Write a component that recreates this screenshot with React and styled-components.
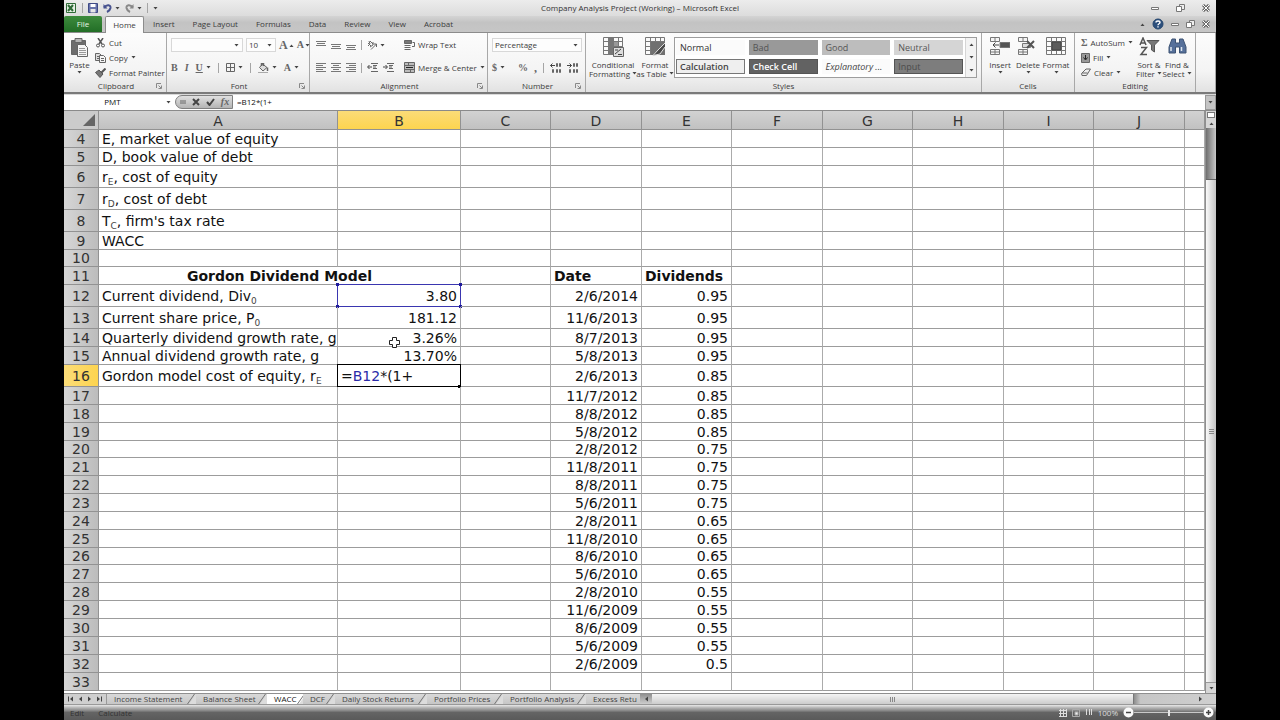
import React from "react";
import styled, { createGlobalStyle, css } from "styled-components";

const Global = createGlobalStyle`
  * { box-sizing: border-box; }
  body { margin: 0; background: #000; }
  button, input, select { font: inherit; color: inherit; margin: 0; padding: 0; border: 0; background: none; }
  svg { display: block; flex: none; }
`;

const Page = styled.div`
  min-height: 100vh;
  padding: 0 5%;
  display: flex;
  flex-direction: column;
  font: 8px/10px "Open Sans", "Noto Sans", sans-serif;
  color: #3c3c3c;
`;

/* ---------- title bar and tabs ---------- */
const TitleBar = styled.header`
  height: 16px;
  display: grid;
  grid-template-columns: 1fr auto 1fr;
  align-items: center;
  background: linear-gradient(#ececec, #dcdcdc);
`;
const QuickAccess = styled.div`
  display: flex;
  align-items: center;
  gap: 5px;
  padding-left: 1px;
`;
const Title = styled.h1`
  margin: 0;
  font: inherit;
  color: #333;
`;
const WindowButtons = styled.div`
  display: flex;
  justify-content: flex-end;
  align-items: center;
  gap: ${(p) => p.$gap || 0}px;
  padding-right: 6px;
  margin-left: auto;
`;
const IconButton = styled.button`
  display: flex;
  align-items: center;
  justify-content: center;
  gap: 3px;
`;
const TabBar = styled.nav`
  height: 17px;
  display: flex;
  align-items: stretch;
  background: linear-gradient(#d4d4d4, #c3c3c3 40%, #c6c6c6);
  border-bottom: 1px solid #8c8c8c;
`;
const Tab = styled.button`
  padding: 0 9px;
  ${(p) =>
    p.$kind === "file" &&
    css`
      width: 38px;
      margin-right: 3px;
      color: #e8f5e4;
      background: linear-gradient(#3d8b3d, #226e26);
      border-radius: 2px 2px 0 0;
    `}
  ${(p) =>
    p.$kind === "active" &&
    css`
      width: 39px;
      padding: 0;
      margin-bottom: -1px;
      background: #fbfbfb;
      border: 1px solid #8c8c8c;
      border-bottom: 0;
      border-radius: 2px 2px 0 0;
    `}
`;

/* ---------- ribbon ---------- */
const Ribbon = styled.section`
  height: 61px;
  display: flex;
  background: linear-gradient(#fcfcfc, #f4f4f4 65%, #e2e2e2);
  border-bottom: 2px solid #7a7a7a;
  overflow: hidden;
`;
const Group = styled.div`
  flex: ${(p) => (p.$grow ? "1 0" : "0 0")} ${(p) => p.$w}px;
  min-width: 0;
  display: flex;
  flex-direction: column;
  border-right: 1px solid #a8a8a8;
`;
const GroupBody = styled.div`
  flex: 1;
  display: flex;
  gap: ${(p) => p.$gap || 0}px;
  padding: 2px ${(p) => p.$pad || 4}px 0;
`;
const GroupLabel = styled.div`
  height: 12px;
  display: flex;
  align-items: center;
  span { flex: 1; text-align: center; }
  button { margin: 0 4px 0 -12px; }
`;
const Stack = styled.div`
  display: flex;
  flex-direction: column;
  gap: ${(p) => p.$gap || 0}px;
`;
const Line = styled.div`
  height: ${(p) => p.$h || 15}px;
  display: flex;
  align-items: center;
  gap: ${(p) => p.$gap || 4}px;
`;
const Tool = styled.button`
  display: flex;
  align-items: center;
  gap: ${(p) => p.$gap || 3}px;
  min-width: ${(p) => p.$w || 0}px;
  white-space: nowrap;
`;
const BigTool = styled.button`
  flex: none;
  width: ${(p) => p.$w}px;
  margin-top: 2px;
  display: flex;
  flex-direction: column;
  align-items: center;
  justify-content: flex-start;
  align-self: flex-start;
  white-space: nowrap;
  line-height: 8px;
  > svg:first-child { margin-bottom: 3px; }
  > svg:last-child { margin-top: 2px; }
  span { display: flex; align-items: center; gap: 2px; min-height: 9px; }
`;
const Divider = styled.i`
  width: 1px;
  height: ${(p) => p.$h || 10}px;
  background: #a5a5a5;
`;
const Select = styled.select`
  appearance: none;
  width: ${(p) => p.$w}px;
  height: 14px;
  padding-left: 2px;
  border: 1px solid #d8d8d8;
  background: #fdfdfd;
`;
const SelectBox = styled.label`
  display: flex;
  align-items: center;
  svg { margin-left: -9px; margin-right: 4px; pointer-events: none; }
`;
const Letter = styled.span`
  font-family: "Liberation Serif", serif;
  font-size: ${(p) => p.$s || 10}px;
  font-weight: bold;
  font-style: ${(p) => (p.$i ? "italic" : "normal")};
  text-decoration: ${(p) => (p.$u ? "underline" : "none")};
  color: #666;
`;
const Gallery = styled.div`
  height: 41px;
  flex: 1;
  min-width: 0;
  margin-top: 2px;
  display: flex;
  border: 1px solid #9d9d9d;
  background: #fff;
`;
const Swatches = styled.div`
  flex: 1;
  display: grid;
  grid-template-columns: repeat(4, 1fr);
  grid-auto-rows: 15px;
  gap: 4px;
  padding: 2px 0 0 1px;
`;
const Swatch = styled.button`
  text-align: left;
  padding-left: 3px;
  font-size: 9px;
  color: ${(p) => p.$fg};
  background: ${(p) => p.$bg};
  font-weight: ${(p) => (p.$b ? 600 : 400)};
  font-style: ${(p) => (p.$i ? "italic" : "normal")};
  border: 1px solid ${(p) => p.$line || "transparent"};
  white-space: nowrap;
`;
const GalleryScroll = styled.div`
  width: 11px;
  margin-left: 2px;
  display: grid;
  background: #f3f3f3;
  border-left: 1px solid #d5d5d5;
`;

/* ---------- formula bar ---------- */
const FormulaBar = styled.div`
  height: 17px;
  display: flex;
  align-items: stretch;
  background: #fff;
  border-top: 1px solid #dadada;
  border-bottom: 1px solid #8a8a8a;
  color: #111;
`;
const NameBox = styled.input`
  width: 97px;
  padding-bottom: 2px;
  text-align: center;
`;
const NameCaret = styled(IconButton)`
  width: 14px;
`;
const FxStrip = styled.div`
  width: 58px;
  margin: 0 0 1px;
  display: flex;
  align-items: center;
  justify-content: space-around;
  background: linear-gradient(#e0e0e0, #b4b4b4);
  border: 1px solid #808080;
  border-radius: 8px 0 0 8px;
`;
const FormulaInput = styled.input`
  flex: 1;
  min-width: 0;
  padding: 0 0 2px 4px;
`;
const Expand = styled(IconButton)`
  width: 11px;
  background: #c4c4c4;
  border: 1px solid #999;
`;

/* ---------- sheet ---------- */
const Work = styled.main`
  flex: 1;
  display: flex;
  background: #fff;
`;
const SheetPane = styled.div`
  flex: 1;
  min-width: 0;
  overflow: hidden;
`;
const Sheet = styled.table`
  width: 100%;
  table-layout: fixed;
  border-collapse: separate;
  border-spacing: 0;
  font: 14px/16px "DejaVu Sans", Verdana, sans-serif;
  color: #111;
`;
const Row = styled.tr`
  height: ${(p) => p.$h}px;
`;
const headBase = css`
  padding: 0;
  font-weight: 400;
  text-align: center;
  color: #333;
  border-right: 1px solid #929292;
  border-bottom: 1px solid #929292;
`;
const ColHead = styled.th`
  ${headBase}
  padding-top: 2px;
  background: ${(p) => (p.$on ? "linear-gradient(#fbdc78, #fdd44f)" : "linear-gradient(#d2d2d2, #c1c1c1)")};
`;
const Corner = styled.td`
  ${headBase}
  background: #cbcbcb;
  svg { margin: 0 3px 0 auto; }
`;
const RowHead = styled.th`
  ${headBase}
  background: ${(p) => (p.$on ? "linear-gradient(90deg, #fbdc78, #fdd44f)" : "linear-gradient(90deg, #d6d6d6, #bcbcbc)")};
`;
const Cell = styled.td`
  position: relative;
  padding: 0 3px;
  white-space: nowrap;
  text-align: ${(p) => p.$align || "left"};
  font-weight: ${(p) => (p.$bold ? 700 : 400)};
  border-right: 1px solid #ababab;
  border-bottom: 1px solid #9c9c9c;
  sub { font-size: 9px; line-height: 0; vertical-align: -3px; color: #444; }
`;
const Reference = styled.div`
  position: absolute;
  inset: -1px;
  border: 1px solid #3a36b0;
`;
const Handle = styled.i`
  position: absolute;
  width: 3px;
  height: 3px;
  background: ${(p) => p.$c || "#1f1a9c"};
  ${(p) => p.$at}
`;
const Editor = styled.div`
  position: absolute;
  inset: -1px;
  display: flex;
  align-items: center;
  padding-left: 3px;
  background: #fff;
  border: 1px solid #000;
  b { font-weight: 400; color: #2a2aa8; }
`;
const Pointer = styled.svg`
  position: absolute;
  left: 51px;
  top: 8px;
`;

/* ---------- scroll bars, sheet tabs, status ---------- */
const VScroll = styled.div`
  width: 11px;
  display: flex;
  flex-direction: column;
  background: #d6d6d6;
  border-left: 1px solid #8f8f8f;
`;
const Split = styled.div`
  height: 6px;
  margin: 1px 1px 0;
  background: #fff;
  border: 1px solid #777;
`;
const Arrow = styled(IconButton)`
  height: 10px;
`;
const VTrack = styled.div`
  flex: 1;
  display: flex;
  flex-direction: column;
  padding-top: 51px;
  background: linear-gradient(90deg, #6f6f6f, #c8c8c8);
`;
const VThumb = styled.div`
  flex: 1;
  display: flex;
  align-items: center;
  justify-content: center;
  background: linear-gradient(90deg, #fafafa, #c4c4c4);
  border-top: 1px solid #666;
  border-bottom: 1px solid #999;
`;
const SheetBar = styled.footer`
  height: 12px;
  display: flex;
  align-items: stretch;
  background: #cfcfcf;
  border-top: 1px solid #8f8f8f;
  border-bottom: 1px solid #999;
`;
const SheetNav = styled.div`
  width: 43px;
  display: flex;
  align-items: center;
  justify-content: space-around;
  padding: 0 2px;
  border-right: 1px solid #999;
`;
const SheetTabs = styled.div`
  width: 533px;
  display: flex;
  overflow: hidden;
`;
const SheetTab = styled.button`
  flex: none;
  width: ${(p) => p.$w}px;
  display: flex;
  align-items: center;
  justify-content: space-between;
  padding-left: 7px;
  white-space: nowrap;
  line-height: 10px;
  background: ${(p) => (p.$on ? "#fff" : "linear-gradient(#d9d9d9, #c6c6c6)")};
  color: ${(p) => (p.$on ? "#111" : "#444")};
`;
const HScroll = styled.div`
  flex: 1;
  display: flex;
  background: linear-gradient(#909090, #cdcdcd);
`;
const HArrow = styled(IconButton)`
  width: 12px;
`;
const HThumb = styled.div`
  flex: 1;
  display: flex;
  align-items: center;
  justify-content: center;
  background: linear-gradient(#f4f4f4, #cccccc);
  border-right: 1px solid #777;
`;
const HEnd = styled.div`
  width: 82px;
  display: flex;
  align-items: center;
  justify-content: flex-end;
  padding-right: 12px;
  background: linear-gradient(90deg, #8d8d8d, #c6c6c6 8%, #cfcfcf);
`;
const StatusBar = styled.div`
  height: 15px;
  display: flex;
  align-items: center;
  gap: 14px;
  padding: 0 2px 0 6px;
  color: #333;
  background: linear-gradient(#e8e8e8, #b0b0b0 20%, #8c8c8c 36%, #646464 50%, #5a5a5a);
`;
const StatusRight = styled.div`
  margin-left: auto;
  display: flex;
  align-items: center;
  gap: 5px;
  color: #ddd;
`;
const Zoom = styled.label`
  display: flex;
  align-items: center;
  input {
    appearance: none;
    width: 69px;
    height: 1px;
    background: #c9c9c9;
  }
  input::-webkit-slider-thumb { appearance: none; width: 2px; height: 6px; background: #e6e6e6; }
`;

/* ---------- drawings ---------- */
const Caret = ({ up }) => (
  <svg width="5" height="3" viewBox="0 0 5 3" aria-hidden="true">
    <path d={up ? "M0.5 3L2.5 0.5L4.5 3Z" : "M0.5 0L2.5 2.5L4.5 0Z"} fill="#444" />
  </svg>
);
const Launcher = () => (
  <svg width="6" height="6" viewBox="0 0 6 6" fill="none" stroke="#888" aria-hidden="true">
    <path d="M0.5 5V0.5H5M2.5 2.5L5 5M5.5 2.5V5.5H2.5" />
  </svg>
);
const Ico = ({ w = 12, h = 12, children, sw = 1, c = "#666" }) => (
  <svg width={w} height={h} viewBox={`0 0 ${w} ${h}`} fill="none" stroke={c} strokeWidth={sw} aria-hidden="true">
    {children}
  </svg>
);
const LineIcon = ({ rows }) => (
  <Ico w={10} h={9} c="#777">
    {rows.map(([y, a, b]) => (
      <path key={y} d={`M${a} ${y + 0.5}H${b}`} />
    ))}
  </Ico>
);
const Excel = () => (
  <Ico w={12} h={12} c="#2f6b37">
    <path d="M1.5 1.5H10.5V10.5H1.5Z" fill="#e5f0e4" />
    <path d="M3 3L8 9M8 3L3 9" strokeWidth="2" />
  </Ico>
);
const Save = () => (
  <Ico w={10} h={10} c="#3f4a86">
    <path d="M0.5 0.5H9.5V9.5H0.5Z" fill="#6873ab" />
    <path d="M2.5 1H7.5V4H2.5Z" fill="#fff" stroke="none" />
    <path d="M2.5 6H7.5V9.5H2.5Z" fill="#e6e6e6" stroke="none" />
  </Ico>
);
const Undo = ({ flip }) => (
  <Ico w={9} h={10} c={flip ? "#888" : "#47528f"} sw={2}>
    <g transform={flip ? "matrix(-1 0 0 1 9 0)" : undefined}>
      <path d="M1 4.5C4 1 8 2 7.5 5C7 7.5 5 8.5 4 9" />
      <path d="M0.5 1V5.5H4.5Z" fill={flip ? "#888" : "#47528f"} stroke="none" />
    </g>
  </Ico>
);
const Min = () => (
  <Ico w={8} h={8} c="#777">
    <path d="M0.5 3.5H7.5V5.5H0.5Z" fill="#fff" />
  </Ico>
);
const Restore = () => (
  <Ico w={9} h={8} c="#777">
    <path d="M3.5 0.5H8.5V5.5H3.5Z" fill="#eee" />
    <path d="M0.5 2.5H5.5V7.5H0.5Z" fill="#fff" />
  </Ico>
);
const Close = () => (
  <Ico w={8} h={8} c="#666" sw={3}>
    <path d="M1 1L7 7M7 1L1 7" />
    <path d="M1 1L7 7M7 1L1 7" stroke="#fff" strokeWidth="1" />
  </Ico>
);
const Help = () => (
  <Ico w={12} h={12} c="#24466f">
    <circle cx="6" cy="6" r="5" fill="#2c4f7c" />
    <path d="M4 4.5C4 2.5 8 2.5 8 4.5C8 6 6 5.5 6 7.2M6 8.2V9.5" stroke="#fff" strokeWidth="1.4" />
  </Ico>
);
const Paste = () => (
  <Ico w={19} h={20}>
    <path d="M1.5 3.5H15.5V17.5H1.5Z" fill="#6d6d6d" />
    <path d="M5 1.5H12V5.5H5Z" fill="#b5b5b5" />
    <path d="M7.5 7.5H14.5L17.5 10.5V19.5H7.5Z" fill="#f5f5f5" />
    <path d="M9 11.5H15M9 13.5H16M9 15.5H16M9 17.5H16" stroke="#999" />
  </Ico>
);
const Cut = () => (
  <Ico w={11} h={10} c="#555">
    <path d="M3 0L7 6M8 0L4 6" strokeWidth="1.5" />
    <circle cx="3" cy="7.5" r="1.5" />
    <circle cx="8" cy="7.5" r="1.5" />
  </Ico>
);
const Copy = () => (
  <Ico w={11} h={10}>
    <path d="M0.5 0.5H4.5L6.5 2.5V7.5H0.5Z" fill="#ddd" />
    <path d="M4.5 2.5H8.5L10.5 4.5V9.5H4.5Z" fill="#f5f5f5" />
    <path d="M6 5.5H9M6 7.5H9M2 3.5H4M2 5.5H4" />
  </Ico>
);
const Brush = () => (
  <Ico w={11} h={10} c="#555">
    <path d="M10.5 0.5L6 5" strokeWidth="2" />
    <path d="M4 2L8 6L5 9.5L0.5 4.5Z" fill="#777" />
  </Ico>
);
const Borders = () => (
  <Ico w={9} h={9}>
    <path d="M0.5 0.5H8.5V8.5H0.5ZM4.5 0V9M0 4.5H9" />
  </Ico>
);
const Bucket = () => (
  <Ico w={11} h={10}>
    <path d="M4.5 1L9 4.5L5 8L1.5 4.5Z" fill="#ddd" />
    <path d="M3.5 3V0.5H5.5V3M9.5 4.5V8" strokeWidth="1.5" />
    <path d="M0 9.5H10" stroke="#aaa" />
  </Ico>
);
const Orient = () => (
  <Ico w={10} h={10}>
    <path d="M1 3L4 6M3 1L6 4M1 6L3 4L2 1M3 7L6 5L6 2M4 9.5L9.5 4M9.5 7V4H6.5" />
  </Ico>
);
const Indent = ({ flip }) => (
  <Ico w={11} h={9}>
    <path d="M4 0.5H11M6 2.5H10M6 5.5H10M4 8.5H11M6 4H9" />
    <path d={flip ? "M0 4H4M2.5 2L4.5 4L2.5 6" : "M5 4H1M2.5 2L0.5 4L2.5 6"} stroke="#444" />
  </Ico>
);
const Wrap = () => (
  <Ico w={11} h={11}>
    <path d="M0.5 0.5H7.5V3.5H0.5Z" fill="#777" />
    <path d="M0.5 5.5H6.5M0.5 7.5H6.5M0.5 9.5H6.5M8.5 2.5H10.5V6.5H8" />
  </Ico>
);
const Merge = () => (
  <Ico w={11} h={11}>
    <path d="M0.5 0.5H10.5V10.5H0.5ZM0 3.5H11M0 7.5H11M4.5 0V3M6.5 8V11" fill="#bbb" />
    <path d="M2 5.5H9" stroke="#222" />
  </Ico>
);
const Decimals = ({ flip }) => (
  <Ico w={11} h={10}>
    <path d="M6.5 0.5H7.5V3.5H6.5ZM9.5 0.5H10.5V3.5H9.5ZM6.5 6.5H7.5V9.5H6.5ZM9.5 6.5H10.5V9.5H9.5ZM2.5 6.5H3.5V9.5H2.5Z" />
    <path d={flip ? "M0 2.5H4.5M2.5 0.5L4.5 2.5L2.5 4.5" : "M5 2.5H0.5M2.5 0.5L0.5 2.5L2.5 4.5"} stroke="#444" />
  </Ico>
);
const GridIcon = ({ kind }) => (
  <Ico w={21} h={20} c="#777">
    <path d="M0.5 0.5H19.5V17.5H0.5ZM0 4.5H20M0 9.5H20M0 13.5H20M5.5 0V18M10.5 0V18M15.5 0V18" fill="#fafafa" />
    {kind === "cond" && (
      <>
        <path d="M6 1H11V18H6Z" fill="#777" stroke="none" />
        <path d="M11 5H15V9H11Z" fill="#999" stroke="none" />
        <path d="M10.5 10.5H20.5V19.5H10.5Z" fill="#ddd" stroke="#666" />
        <path d="M12 13H15M12 17L18 12M15 17.5H19" stroke="#444" />
      </>
    )}
    {kind === "table" && (
      <>
        <path d="M6 5H20V18H6Z" fill="#707070" stroke="none" />
        <path d="M20 6L13 13L8 18.5L15 17L20 10" fill="#4a4a4a" stroke="#ddd" />
      </>
    )}
    {kind === "format" && (
      <path d="M6 5H15V13H6Z" fill="#5c5c5c" stroke="#444" />
    )}
  </Ico>
);
const RowsIcon = ({ del }) => (
  <Ico w={20} h={20} c="#777">
    <path d="M0.5 0.5H9.5V4.5H0.5ZM5 0V5M0.5 12.5H9.5V17.5H0.5ZM5 12V18M0.5 15H10" fill="#f5f5f5" />
    {del ? (
      <>
        <path d="M4.5 6.5H12.5V10.5H4.5Z" fill="#ddd" />
        <path d="M9 4L16 11M16 4L9 11" stroke="#555" strokeWidth="2" />
      </>
    ) : (
      <>
        <path d="M10 5.5H20V10.5H10Z" fill="#555" />
        <path d="M9 8H3M5.5 5.5L3 8L5.5 10.5" stroke="#444" />
      </>
    )}
  </Ico>
);
const FillIcon = () => (
  <Ico w={9} h={10}>
    <path d="M0.5 0.5H8.5V9.5H0.5Z" fill="#999" />
    <path d="M4.5 2V6M2.5 4.5L4.5 7L6.5 4.5" stroke="#222" />
  </Ico>
);
const Eraser = () => (
  <Ico w={10} h={9}>
    <path d="M5 1L9.5 1L5.5 7.5H1L0.5 5.5ZM1 5H6.5" fill="#eee" />
  </Ico>
);
const Funnel = () => (
  <Ico w={21} h={20} c="#555">
    <path d="M8 3.5H20L15.5 8V15L12.5 13V8Z" fill="#777" />
    <path d="M1 8L4 1L7 8M2 6H6M2 10.5H7.5L2 17.5H8" strokeWidth="1.5" />
  </Ico>
);
const Binoculars = () => (
  <Ico w={19} h={20} c="#3c5273">
    <path d="M4 2H7.5V6H11.5V2H15L18 10V16H11.5V10H7.5V16H1V10Z" fill="#56709a" />
    <path d="M3 10V14M13.5 10V14" stroke="#dfe6f0" strokeWidth="1.5" />
  </Ico>
);
const Tri = ({ left, bar }) => (
  <Ico w={6} h={6}>
    <g transform={left ? undefined : "matrix(-1 0 0 1 6 0)"}>
      <path d="M5 0.5L2 3L5 5.5Z" fill="#444" stroke="none" />
      {bar && <path d="M0.5 0.5V5.5" stroke="#444" />}
    </g>
  </Ico>
);
const Slash = () => (
  <Ico w={9} h={10} c="#777">
    <path d="M2 10L9 0V10Z" fill="#dcdcdc" stroke="none" />
    <path d="M0.5 10L7.5 0" />
  </Ico>
);
const Grip = ({ wide }) => (
  <Ico w={5} h={5} c="#888">
    <path d={wide ? "M0 0.5H5M0 2.5H5M0 4.5H5" : "M0.5 0V5M2.5 0V5M4.5 0V5"} />
  </Ico>
);
const Round = ({ plus }) => (
  <Ico w={11} h={11} c="#444">
    <circle cx="5.5" cy="5.5" r="5" fill="#fafafa" stroke="none" />
    <path d={plus ? "M3 5.5H8M5.5 3V8" : "M3 5.5H8"} strokeWidth="1.5" />
  </Ico>
);

/* ---------- data ---------- */
const cols = [
  ["A", 239], ["B", 123], ["C", 90], ["D", 91], ["E", 90], ["F", 91],
  ["G", 90], ["H", 91], ["I", 90], ["J", 91],
];
const labels = {
  4: "E, market value of equity",
  5: "D, book value of debt",
  6: <>r<sub>E</sub>, cost of equity</>,
  7: <>r<sub>D</sub>, cost of debt</>,
  8: <>T<sub>C</sub>, firm's tax rate</>,
  9: "WACC",
  12: <>Current dividend, Div<sub>0</sub></>,
  13: <>Current share price, P<sub>0</sub></>,
  14: "Quarterly dividend growth rate, g",
  15: "Annual dividend growth rate, g",
  16: <>Gordon model cost of equity, r<sub>E</sub></>,
};
const values = { 12: "3.80", 13: "181.12", 14: "3.26%", 15: "13.70%" };
const dividends = [
  ["2/6/2014", "0.95"], ["11/6/2013", "0.95"], ["8/7/2013", "0.95"], ["5/8/2013", "0.95"],
  ["2/6/2013", "0.85"], ["11/7/2012", "0.85"], ["8/8/2012", "0.85"], ["5/8/2012", "0.85"],
  ["2/8/2012", "0.75"], ["11/8/2011", "0.75"], ["8/8/2011", "0.75"], ["5/6/2011", "0.75"],
  ["2/8/2011", "0.65"], ["11/8/2010", "0.65"], ["8/6/2010", "0.65"], ["5/6/2010", "0.65"],
  ["2/8/2010", "0.55"], ["11/6/2009", "0.55"], ["8/6/2009", "0.55"], ["5/6/2009", "0.55"],
  ["2/6/2009", "0.5"],
];
const tall = [6, 7, 8, 12, 13, 16];
const short = [10, 20, 26];
const rows = Array.from({ length: 30 }, (_, i) => i + 4);
const rowHeight = (n) => (tall.includes(n) ? 22 : short.includes(n) ? 17 : 18);

const swatches = [
  { t: "Normal", bg: "#fbfbfb", fg: "#333" },
  { t: "Bad", bg: "#999", fg: "#555" },
  { t: "Good", bg: "#bdbdbd", fg: "#555" },
  { t: "Neutral", bg: "#d5d5d5", fg: "#555" },
  { t: "Calculation", bg: "#efefef", fg: "#444", b: true, line: "#777" },
  { t: "Check Cell", bg: "#626262", fg: "#fff", b: true, line: "#555" },
  { t: "Explanatory ...", bg: "#fbfbfb", fg: "#444", i: true },
  { t: "Input", bg: "#7d7d7d", fg: "#4c4c4c", line: "#555" },
];
const sheets = [
  ["Income Statement", 89], ["Balance Sheet", 71], ["WACC", 36], ["DCF", 32],
  ["Daily Stock Returns", 92], ["Portfolio Prices", 76], ["Portfolio Analysis", 83], ["Excess Retu", 54],
];

const DataRow = ({ n }) => {
  const entry = n === 11 ? ["Date", "Dividends"] : dividends[n - 12] || [];
  const align = n === 11 ? "left" : "right";
  return (
    <Row $h={rowHeight(n)}>
      <RowHead scope="row" $on={n === 16}>{n}</RowHead>
      {n === 11 ? (
        <Cell colSpan={2} $align="center" $bold>Gordon Dividend Model</Cell>
      ) : (
        <>
          <Cell>{labels[n]}</Cell>
          <Cell $align="right">
            {values[n]}
            {n === 12 && (
              <Reference>
                <Handle $at="left:-2px;top:-2px;" />
                <Handle $at="right:-2px;top:-2px;" />
                <Handle $at="left:-2px;bottom:-2px;" />
                <Handle $at="right:-2px;bottom:-2px;" />
              </Reference>
            )}
            {n === 14 && (
              <Pointer width="11" height="11" viewBox="0 0 11 11" aria-hidden="true">
                <path d="M3.5 0.5H7.5V3.5H10.5V7.5H7.5V10.5H3.5V7.5H0.5V3.5H3.5Z" fill="#fff" stroke="#222" />
              </Pointer>
            )}
            {n === 16 && (
              <Editor>
                =<b>B12</b>*(1+
                <Handle $c="#000" $at="right:-1px;bottom:-2px;" />
              </Editor>
            )}
          </Cell>
        </>
      )}
      <Cell />
      <Cell $align={align} $bold={n === 11}>{entry[0]}</Cell>
      <Cell $align={align} $bold={n === 11}>{entry[1]}</Cell>
      {["F", "G", "H", "I", "J", "K"].map((c) => <Cell key={c} />)}
    </Row>
  );
};

export default function App() {
  return (
    <Page>
      <Global />
      <TitleBar>
        <QuickAccess>
          <Excel />
          <Divider />
          <IconButton aria-label="Save"><Save /></IconButton>
          <IconButton aria-label="Undo"><Undo /><Caret /></IconButton>
          <IconButton aria-label="Redo"><Undo flip /><Caret /></IconButton>
          <Divider />
          <IconButton aria-label="Customize"><Caret /></IconButton>
        </QuickAccess>
        <Title>Company Analysis Project (Working) – Microsoft Excel</Title>
        <WindowButtons $gap={17}>
          <IconButton aria-label="Minimize"><Min /></IconButton>
          <IconButton aria-label="Restore"><Restore /></IconButton>
          <IconButton aria-label="Close"><Close /></IconButton>
        </WindowButtons>
      </TitleBar>

      <TabBar>
        <Tab $kind="file">File</Tab>
        <Tab $kind="active">Home</Tab>
        {["Insert", "Page Layout", "Formulas", "Data", "Review", "View", "Acrobat"].map((t) => (
          <Tab key={t}>{t}</Tab>
        ))}
        <WindowButtons $gap={7}>
          <IconButton aria-label="Collapse ribbon"><Caret up /></IconButton>
          <IconButton aria-label="Help"><Help /></IconButton>
          <IconButton aria-label="Minimize workbook"><Min /></IconButton>
          <IconButton aria-label="Restore workbook"><Restore /></IconButton>
          <IconButton aria-label="Close workbook"><Close /></IconButton>
        </WindowButtons>
      </TabBar>

      <Ribbon>
        <Group $w={103}>
          <GroupBody $gap={3} $pad={3}>
            <BigTool $w={25}><Paste /><span>Paste</span><Caret /></BigTool>
            <Stack>
              <Line><Tool><Cut />Cut</Tool></Line>
              <Line><Tool><Copy />Copy<Caret /></Tool></Line>
              <Line><Tool><Brush />Format Painter</Tool></Line>
            </Stack>
          </GroupBody>
          <GroupLabel><span>Clipboard</span><button aria-label="Clipboard options"><Launcher /></button></GroupLabel>
        </Group>

        <Group $w={143}>
          <GroupBody>
            <Stack $gap={5}>
              <Line $h={20} $gap={3}>
                <SelectBox><Select $w={72} aria-label="Font"><option> </option></Select><Caret /></SelectBox>
                <SelectBox><Select $w={30} aria-label="Font size"><option>10</option></Select><Caret /></SelectBox>
                <Tool $gap={1} aria-label="Grow font"><Letter $s={12}>A</Letter><Caret up /></Tool>
                <Tool $gap={1} aria-label="Shrink font"><Letter $s={10}>A</Letter><Caret /></Tool>
              </Line>
              <Line $gap={7}>
                <Tool aria-label="Bold"><Letter>B</Letter></Tool>
                <Tool aria-label="Italic"><Letter $i>I</Letter></Tool>
                <Tool aria-label="Underline"><Letter $u>U</Letter><Caret /></Tool>
                <Divider />
                <Tool aria-label="Borders"><Borders /><Caret /></Tool>
                <Divider />
                <Tool aria-label="Fill color"><Bucket /><Caret /></Tool>
                <Tool aria-label="Font color"><Letter>A</Letter><Caret /></Tool>
              </Line>
            </Stack>
          </GroupBody>
          <GroupLabel><span>Font</span><button aria-label="Font options"><Launcher /></button></GroupLabel>
        </Group>

        <Group $w={178}>
          <GroupBody $pad={6} $gap={5}>
            <Stack $gap={5}>
              <Line $h={20} $gap={5}>
                <Tool aria-label="Top align"><LineIcon rows={[[0, 0, 10], [2, 1, 9], [4, 0, 10]]} /></Tool>
                <Tool aria-label="Middle align"><LineIcon rows={[[3, 0, 10], [5, 1, 9], [7, 0, 10]]} /></Tool>
                <Tool aria-label="Bottom align"><LineIcon rows={[[4, 0, 10], [6, 1, 9], [8, 0, 10]]} /></Tool>
                <Divider />
                <Tool aria-label="Orientation"><Orient /><Caret /></Tool>
              </Line>
              <Line $gap={5}>
                <Tool aria-label="Align left"><LineIcon rows={[[0, 0, 10], [2, 0, 7], [4, 0, 10], [6, 0, 7], [8, 0, 10]]} /></Tool>
                <Tool aria-label="Center"><LineIcon rows={[[0, 0, 10], [2, 2, 8], [4, 0, 10], [6, 2, 8], [8, 0, 10]]} /></Tool>
                <Tool aria-label="Align right"><LineIcon rows={[[0, 0, 10], [2, 3, 10], [4, 0, 10], [6, 3, 10], [8, 0, 10]]} /></Tool>
                <Divider />
                <Tool aria-label="Decrease indent"><Indent /></Tool>
                <Tool aria-label="Increase indent"><Indent flip /></Tool>
              </Line>
            </Stack>
            <Divider $h={38} />
            <Stack $gap={5}>
              <Line $h={20}><Tool><Wrap />Wrap Text</Tool></Line>
              <Line><Tool><Merge />Merge &amp; Center<Caret /></Tool></Line>
            </Stack>
          </GroupBody>
          <GroupLabel><span>Alignment</span><button aria-label="Alignment options"><Launcher /></button></GroupLabel>
        </Group>

        <Group $w={98}>
          <GroupBody>
            <Stack $gap={5}>
              <Line $h={20}>
                <SelectBox><Select $w={90} aria-label="Number format"><option>Percentage</option></Select><Caret /></SelectBox>
              </Line>
              <Line $gap={6}>
                <Tool $w={20} aria-label="Currency"><Letter>$</Letter><Caret /></Tool>
                <Tool aria-label="Percent"><Letter>%</Letter></Tool>
                <Tool aria-label="Comma"><Letter $s={12}>,</Letter></Tool>
                <Divider />
                <Tool aria-label="Increase decimal"><Decimals /></Tool>
                <Tool aria-label="Decrease decimal"><Decimals flip /></Tool>
              </Line>
            </Stack>
          </GroupBody>
          <GroupLabel><span>Number</span><button aria-label="Number options"><Launcher /></button></GroupLabel>
        </Group>

        <Group $w={376} $grow>
          <GroupBody>
            <BigTool $w={46}><GridIcon kind="cond" /><span>Conditional</span><span>Formatting<Caret /></span></BigTool>
            <BigTool $w={38}><GridIcon kind="table" /><span>Format</span><span>as Table<Caret /></span></BigTool>
            <Gallery>
              <Swatches>
                {swatches.map((s) => (
                  <Swatch key={s.t} $bg={s.bg} $fg={s.fg} $b={s.b} $i={s.i} $line={s.line}>{s.t}</Swatch>
                ))}
              </Swatches>
              <GalleryScroll>
                <IconButton aria-label="Previous styles"><Caret up /></IconButton>
                <IconButton aria-label="Next styles"><Caret /></IconButton>
                <IconButton aria-label="More styles"><Caret /></IconButton>
              </GalleryScroll>
            </Gallery>
          </GroupBody>
          <GroupLabel><span>Styles</span></GroupLabel>
        </Group>

        <Group $w={93}>
          <GroupBody>
            <BigTool $w={28}><RowsIcon /><span>Insert</span><Caret /></BigTool>
            <BigTool $w={28}><RowsIcon del /><span>Delete</span><Caret /></BigTool>
            <BigTool $w={28}><GridIcon kind="format" /><span>Format</span><Caret /></BigTool>
          </GroupBody>
          <GroupLabel><span>Cells</span></GroupLabel>
        </Group>

        <Group $w={121}>
          <GroupBody $pad={6}>
            <Stack>
              <Line><Tool $w={54}><Letter>Σ</Letter>AutoSum<Caret /></Tool></Line>
              <Line><Tool><FillIcon />Fill<Caret /></Tool></Line>
              <Line><Tool><Eraser />Clear<Caret /></Tool></Line>
            </Stack>
            <BigTool $w={28}><Funnel /><span>Sort &amp;</span><span>Filter<Caret /></span></BigTool>
            <BigTool $w={28}><Binoculars /><span>Find &amp;</span><span>Select<Caret /></span></BigTool>
          </GroupBody>
          <GroupLabel><span>Editing</span></GroupLabel>
        </Group>
        <Group $w={20} />
      </Ribbon>

      <FormulaBar>
        <NameBox aria-label="Name box" defaultValue="PMT" />
        <NameCaret aria-label="Names"><Caret /></NameCaret>
        <FxStrip>
          <Ico w={8} h={8}><path d="M1 3H7M1 5H7" /></Ico>
          <IconButton aria-label="Cancel"><Ico w={8} h={8} c="#444" sw={2}><path d="M1 1L7 7M7 1L1 7" /></Ico></IconButton>
          <IconButton aria-label="Enter"><Ico w={9} h={8} c="#444" sw={2}><path d="M1 4L3.5 7L8 1" /></Ico></IconButton>
          <IconButton aria-label="Insert function"><Letter $i>fx</Letter></IconButton>
        </FxStrip>
        <FormulaInput aria-label="Formula" defaultValue="=B12*(1+" />
        <Expand aria-label="Expand formula bar"><Caret /></Expand>
      </FormulaBar>

      <Work>
        <SheetPane>
          <Sheet>
            <colgroup>
              <col width="35" />
              {cols.map(([c, w]) => <col key={c} width={w} />)}
              <col />
            </colgroup>
            <thead>
              <Row $h={19}>
                <Corner>
                  <svg width="12" height="12" viewBox="0 0 12 12" aria-hidden="true"><path d="M12 0V12H0Z" fill="#666" /></svg>
                </Corner>
                {cols.map(([c]) => <ColHead key={c} scope="col" $on={c === "B"}>{c}</ColHead>)}
                <ColHead />
              </Row>
            </thead>
            <tbody>
              {rows.map((n) => <DataRow key={n} n={n} />)}
            </tbody>
          </Sheet>
        </SheetPane>
        <VScroll>
          <Split />
          <Arrow aria-label="Scroll up"><Caret up /></Arrow>
          <VTrack><VThumb><Grip wide /></VThumb></VTrack>
          <Arrow aria-label="Scroll down"><Caret /></Arrow>
        </VScroll>
      </Work>

      <SheetBar>
        <SheetNav>
          <IconButton aria-label="First sheet"><Tri left bar /></IconButton>
          <IconButton aria-label="Previous sheet"><Tri left /></IconButton>
          <IconButton aria-label="Next sheet"><Tri /></IconButton>
          <IconButton aria-label="Last sheet"><Tri bar /></IconButton>
        </SheetNav>
        <SheetTabs>
          {sheets.map(([t, w]) => (
            <SheetTab key={t} $w={w} $on={t === "WACC"}>{t}{t !== "Excess Retu" && <Slash />}</SheetTab>
          ))}
        </SheetTabs>
        <HScroll>
          <HArrow aria-label="Scroll left"><Tri left /></HArrow>
          <HThumb><Grip /></HThumb>
          <HEnd><Tri /></HEnd>
        </HScroll>
      </SheetBar>

      <StatusBar>
        <span>Edit</span>
        <span>Calculate</span>
        <StatusRight>
          <Ico w={8} h={8} c="#ddd"><path d="M0 1.5H8M0 4.5H8M0 7.5H8M1.5 0V8M4.5 0V8M7.5 0V8" /></Ico>
          <Ico w={8} h={8} c="#aaa"><path d="M0.5 0.5H7.5V7.5H0.5Z" /><path d="M3 3H6V6H3Z" fill="#eee" /></Ico>
          <Ico w={8} h={8} c="#ddd"><path d="M1.5 0V6M4.5 0V6M6.5 0V6" /></Ico>
          <span>100%</span>
          <Zoom>
            <IconButton aria-label="Zoom out"><Round /></IconButton>
            <input type="range" aria-label="Zoom" defaultValue="50" />
            <IconButton aria-label="Zoom in"><Round plus /></IconButton>
          </Zoom>
        </StatusRight>
      </StatusBar>
    </Page>
  );
}
